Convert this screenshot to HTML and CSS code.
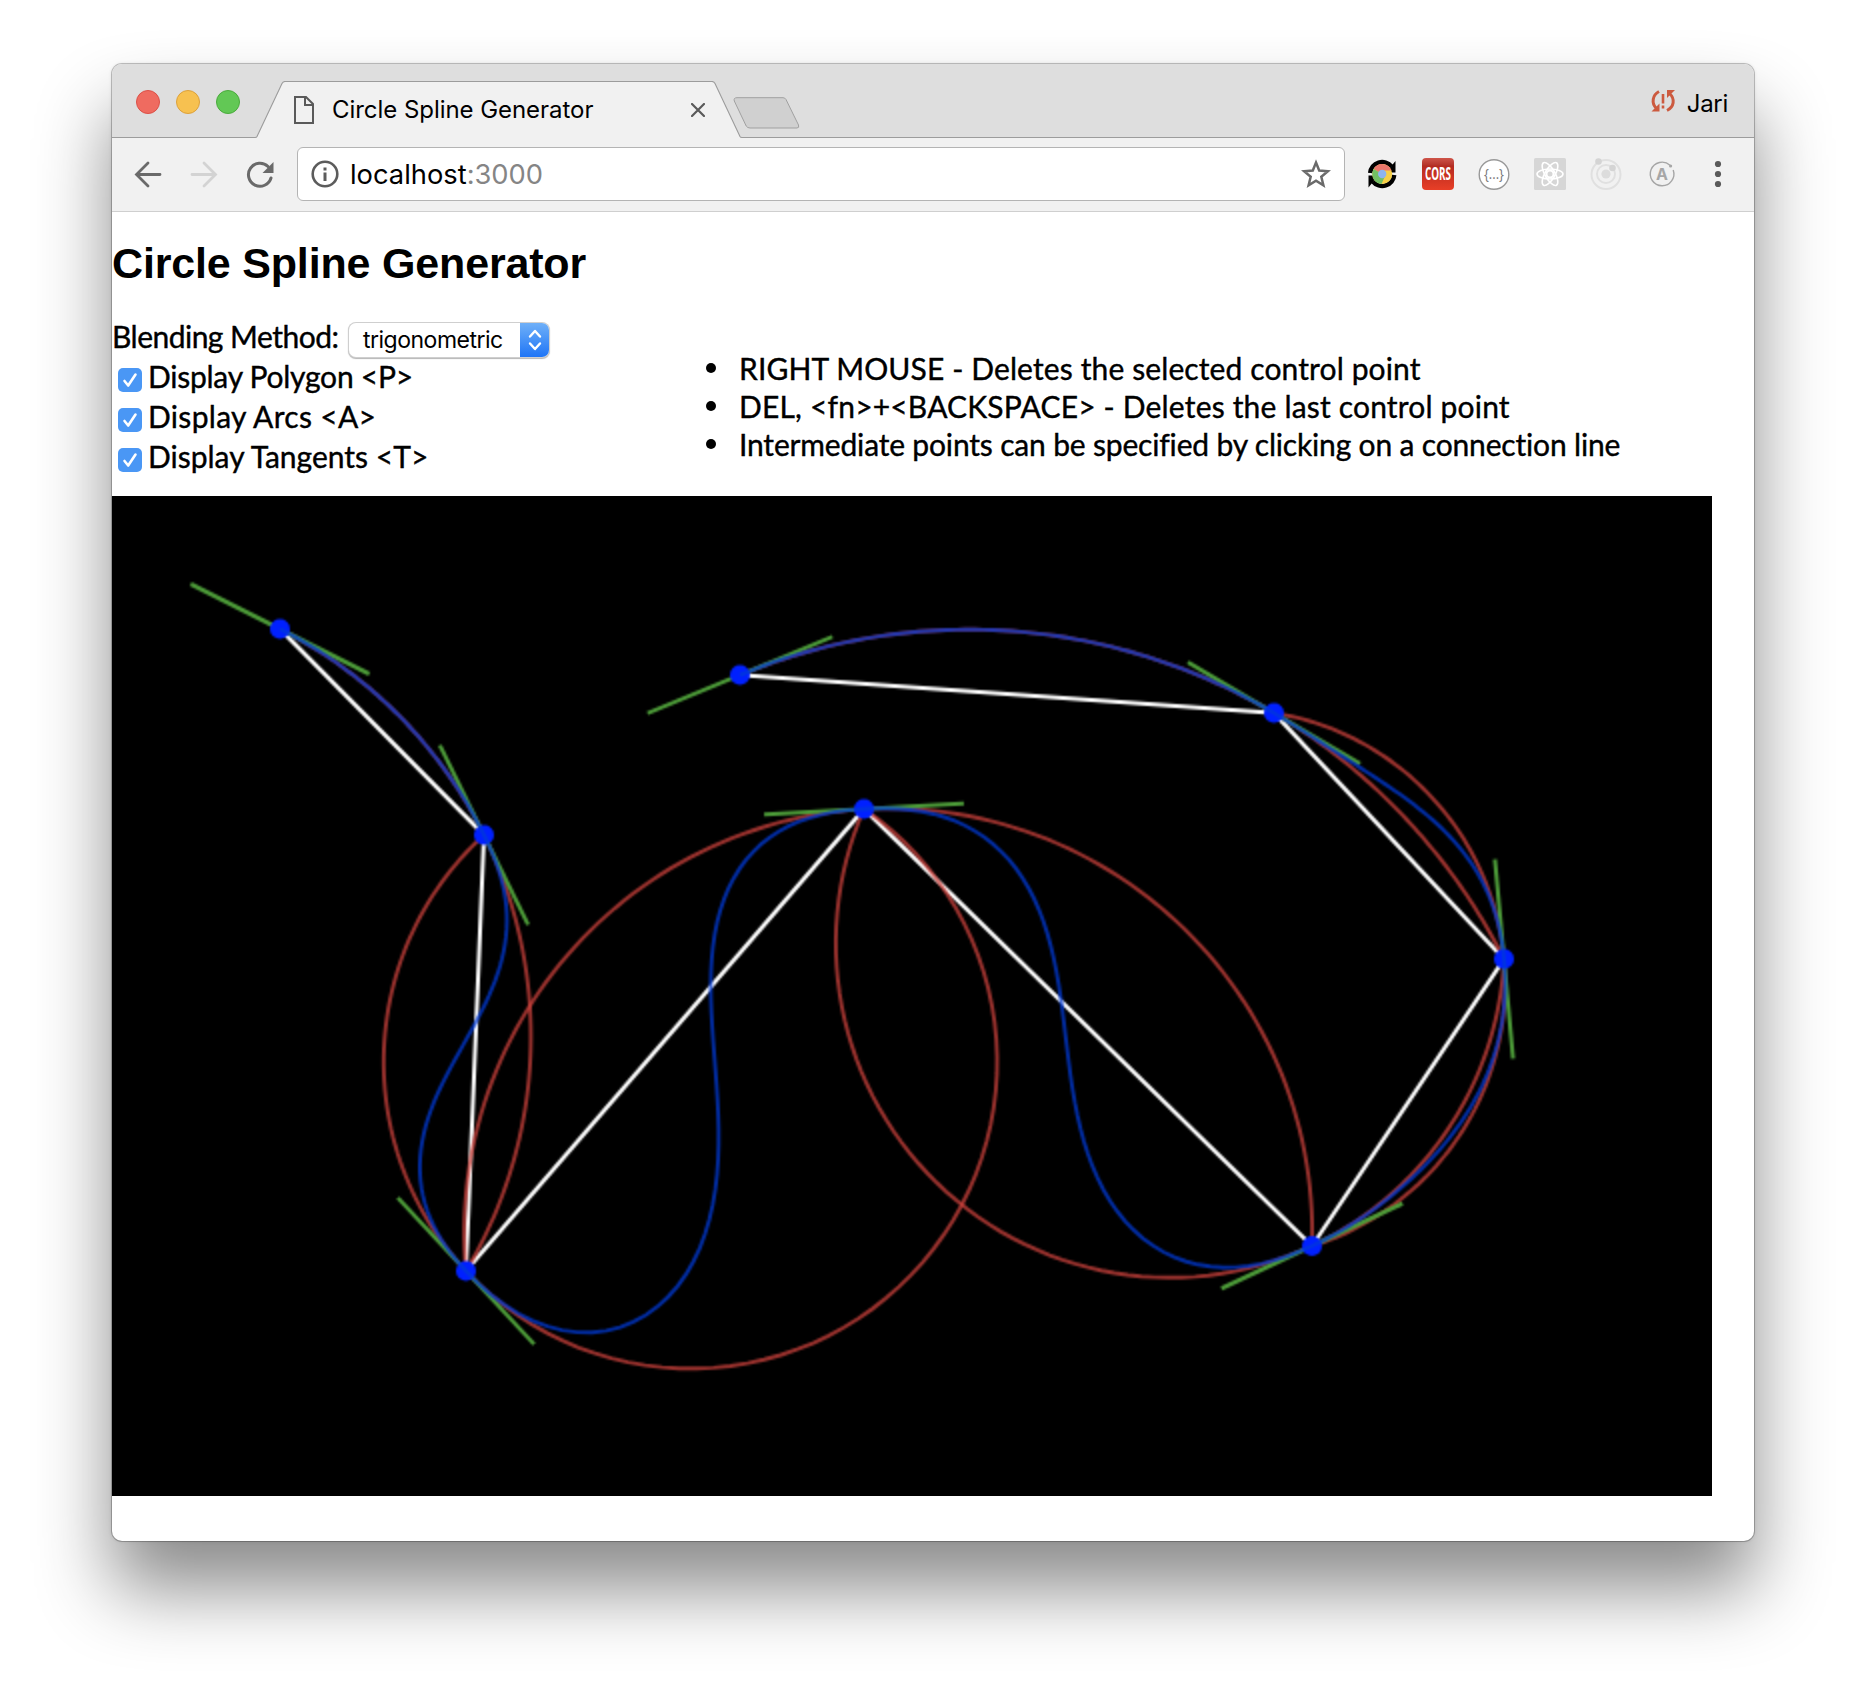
FILE: index.html
```
<!DOCTYPE html>
<html lang="en">
<head>
<meta charset="utf-8">
<title>Circle Spline Generator</title>
<link rel="stylesheet" href="styles.css">
</head>
<body>
<div class="window">
  <header class="titlebar">
    <div class="lights"><i class="light red"></i><i class="light yellow"></i><i class="light green"></i></div>
    <div class="tab">
      <svg class="tab-shape" width="488" height="58" viewBox="0 0 488 58"><path d="M0 56.5Q1.500 56.500 2 55.500L27 2.500Q28 .500 30 .500H457Q459 .500 460 2.500L485 55.500Q485.500 56.500 487 56.500V58H0Z" fill="#f1f1f1"/><path d="M0 56.500Q1.500 56.500 2 55.500L27 2.500Q28 .500 30 .500H457Q459 .500 460 2.500L485 55.500Q485.500 56.500 487 56.500H488" fill="none" stroke="#9c9c9c" stroke-width="1.100"/></svg>
      <svg class="doc" width="20" height="28" viewBox="0 0 20 28"><path d="M1 1H12L19 8V27H1ZM11 1V9H19" fill="none" stroke="#5a5a5a" stroke-width="2"/></svg>
      <span class="tab-title">Circle Spline Generator</span>
      <svg class="close" width="14" height="14" viewBox="0 0 14 14"><path d="M1 1L13 13M13 1L1 13" stroke="#5a5a5a" stroke-width="2.200" stroke-linecap="round"/></svg>
    </div>
    <svg class="newtab" width="68" height="33" viewBox="0 0 68 33"><path d="M4 .700H50Q52 .700 53 2.500L65.500 28Q66.500 31 64 31H17Q14.500 31 13.200 29L1.300 4Q.300 .700 4 .700Z" fill="#d0d0d0" stroke="#a0a0a0"/></svg>
    <div class="profile">
      <svg width="26" height="24" viewBox="0 0 26 24"><g fill="none" stroke="#cc5a3f" stroke-width="3"><path d="M9 2.500C2.500 6 1 14 6.500 19.500M17 21.500C24 18 25.500 10 19.500 4.500"/><path d="M13 5V14.500M13 16.500V19.500" stroke-width="2.600"/></g><path d="M1.500 22.500H9.500V14.500ZM17 1H25L17 9Z" fill="#cc5a3f"/></svg>
      <span class="user">Jari</span>
    </div>
  </header>
  <nav class="toolbar">
    <div class="navs">
      <svg width="28" height="28" viewBox="0 0 28 28"><path d="M26 13.500H3M14 2L2.500 13.500L14 25" fill="none" stroke="#6a6a6a" stroke-width="2.800" stroke-linecap="round"/></svg>
      <svg width="28" height="28" viewBox="0 0 28 28"><path d="M2 13.500H25M14 2L25.500 13.500L14 25" fill="none" stroke="#d3d3d3" stroke-width="2.800" stroke-linecap="round"/></svg>
      <svg width="28" height="28" viewBox="0 0 28 28"><path d="M22 5.500A11.500 11.500 0 1 0 25 17" fill="none" stroke="#6a6a6a" stroke-width="3" stroke-linecap="round"/><path d="M27.500 1V12H16.500Z" fill="#6a6a6a"/></svg>
    </div>
    <div class="omnibox">
      <svg width="28" height="28" viewBox="0 0 28 28"><circle cx="14" cy="14" r="12.300" fill="none" stroke="#5c5c5c" stroke-width="2.600"/><path d="M12.500 7.500H15.500V10.500H12.500ZM12.500 12.500H15.500V21H12.500Z" fill="#5c5c5c"/></svg>
      <span class="url">localhost<span class="port">:3000</span></span>
      <svg class="star" width="30" height="30" viewBox="0 0 30 30"><path d="M15 3.500L18.200 11.500L27 12.200L20.300 17.800L22.400 26.300L15 21.700L7.600 26.300L9.700 17.800L3 12.200L11.800 11.500Z" fill="none" stroke="#6a6a6a" stroke-width="2.500"/></svg>
    </div>
    <div class="exts">
      <svg width="32" height="32" viewBox="0 0 32 32"><path d="M4.200 15A12 12 0 0 1 25.500 8.500M28.200 17A12 12 0 0 1 6.900 23.500" fill="none" stroke="#000" stroke-width="4.500"/><path d="M29.500 3V14.500H20ZM2.500 29.500V17.500H12Z" fill="#000"/><circle cx="16.200" cy="16" r="10" fill="#f6cf45"/><path d="M16.200 16L7.600 11A10 10 0 0 1 25.500 12.500H16Z" fill="#e9766b"/><path d="M16.200 16L7.600 11A10 10 0 0 0 15.500 26L19 18Z" fill="#72bf63"/><circle cx="16.200" cy="16" r="4.200" fill="#8db4ee"/></svg>
      <svg width="32" height="32" viewBox="0 0 32 32"><defs><linearGradient id="cors" x2="0" y2="1"><stop offset="0" stop-color="#cf554a"/><stop offset=".22" stop-color="#b5352b"/><stop offset=".25" stop-color="#b52b20"/><stop offset="1" stop-color="#e83f27"/></linearGradient></defs><rect width="32" height="32" rx="4" fill="url(#cors)"/><text x="3" y="22" class="cors-text" textLength="26" lengthAdjust="spacingAndGlyphs">CORS</text></svg>
      <svg width="32" height="32" viewBox="0 0 32 32"><circle cx="16" cy="16.500" r="14.800" fill="#fff" stroke="#999" stroke-width="1.400"/><text x="16" y="20.500" text-anchor="middle" class="json-text" textLength="20" lengthAdjust="spacingAndGlyphs">{...}</text></svg>
      <svg width="32" height="32" viewBox="0 0 32 32"><rect width="32" height="32" rx="1.500" fill="#d6d6d6"/><g fill="none" stroke="#fff" stroke-width="1.600"><ellipse cx="16" cy="16" rx="13" ry="5"/><ellipse cx="16" cy="16" rx="13" ry="5" transform="rotate(60 16 16)"/><ellipse cx="16" cy="16" rx="13" ry="5" transform="rotate(120 16 16)"/><circle cx="16" cy="16" r="3.500" stroke-width="2"/></g></svg>
      <svg width="32" height="32" viewBox="0 0 32 32"><g fill="none" stroke="#e0e0e0" stroke-width="2"><circle cx="16" cy="16.500" r="14.500"/><circle cx="16" cy="16" r="9"/></g><circle cx="16" cy="16" r="4.600" fill="#dcdcdc"/><circle cx="8.500" cy="3.500" r="3.300" fill="#d4d4d4"/><circle cx="22.500" cy="10" r="3.300" fill="#d4d4d4"/></svg>
      <svg width="32" height="32" viewBox="0 0 32 32"><path d="M24 7.200A11.800 11.800 0 1 0 27.200 12" fill="none" stroke="#a6a6a6" stroke-width="1.400"/><circle cx="24.600" cy="8" r="1.600" fill="#a6a6a6"/><text x="16" y="21.500" text-anchor="middle" class="a-text">A</text></svg>
      <svg width="32" height="32" viewBox="0 0 32 32"><g fill="#5a5a5a"><circle cx="16" cy="6" r="3.100"/><circle cx="16" cy="16" r="3.100"/><circle cx="16" cy="26" r="3.100"/></g></svg>
    </div>
  </nav>
  <main class="page">
    <h1>Circle Spline Generator</h1>
    <section class="controls">
      <div class="options">
        <div class="row"><span class="blend">Blending Method:</span>
          <span class="select"><span class="value">trigonometric</span><span class="stepper"><svg width="14" height="24" viewBox="0 0 14 24"><path d="M2 8.500L7 3L12 8.500M2 15.500L7 21L12 15.500" fill="none" stroke="#fff" stroke-width="2.400" stroke-linecap="round" stroke-linejoin="round"/></svg></span></span>
        </div>
        <div class="row check"><span class="box"><svg width="24" height="24" viewBox="0 0 24 24"><path d="M6.500 13L10.200 17.500L17.500 6.500" fill="none" stroke="#fff" stroke-width="2.600" stroke-linecap="round" stroke-linejoin="round"/></svg></span><span class="polygon">Display Polygon &lt;P&gt;</span></div>
        <div class="row check"><span class="box"><svg width="24" height="24" viewBox="0 0 24 24"><path d="M6.500 13L10.200 17.500L17.500 6.500" fill="none" stroke="#fff" stroke-width="2.600" stroke-linecap="round" stroke-linejoin="round"/></svg></span><span class="arcs">Display Arcs &lt;A&gt;</span></div>
        <div class="row check"><span class="box"><svg width="24" height="24" viewBox="0 0 24 24"><path d="M6.500 13L10.200 17.500L17.500 6.500" fill="none" stroke="#fff" stroke-width="2.600" stroke-linecap="round" stroke-linejoin="round"/></svg></span><span class="tangents">Display Tangents &lt;T&gt;</span></div>
      </div>
      <ul class="help">
        <li><span class="help-right">RIGHT MOUSE - Deletes the selected control point</span></li>
        <li><span class="help-del">DEL, &lt;fn&gt;+&lt;BACKSPACE&gt; - Deletes the last control point</span></li>
        <li><span class="help-line">Intermediate points can be specified by clicking on a connection line</span></li>
      </ul>
    </section>
    <canvas id="board" class="board" width="800" height="500"></canvas>
  </main>
</div>
<script src="spline.js"></script>
</body>
</html>
```
FILE: styles.css
```
* { box-sizing: border-box; }
body { margin: 0; height: 1700px; padding: 64px 0 0 112px; background: #fff; overflow: hidden; }
svg { display: block; flex: none; }

.window {
  width: 1642px;
  height: 1477px;
  border-radius: 10px;
  background: #fff;
  box-shadow: 0 0 0 1px rgba(0, 0, 0, .22), 0 48px 74px rgba(0, 0, 0, .46), 0 0 4px rgba(0, 0, 0, .12);
  overflow: hidden;
}

.titlebar {
  display: flex;
  height: 74px;
  padding-left: 24px;
  background: linear-gradient(#dedede 73px, #9c9c9c 73px);
  font-family: Inter, sans-serif;
  font-size: 24px;
  color: #000;
}
.lights { display: flex; gap: 16px; padding-top: 26px; width: 119px; }
.light { width: 24px; height: 24px; border-radius: 50%; border: 1px solid; }
.red { background: #ef6b60; border-color: #dc5047; }
.yellow { background: #f7c150; border-color: #dda13b; }
.green { background: #62c855; border-color: #4aab3c; }

.tab { position: relative; display: flex; width: 484px; margin-top: 17px; height: 57px; padding-left: 39px; }
.tab-shape { position: absolute; left: 0; top: 0; }
.doc, .close, .tab-title { position: relative; }
.doc { margin-top: 15px; }
.tab-title { margin: 14px 0 0 18px; line-height: 30px; width: 359px; white-space: nowrap; letter-spacing: -.05px; }
.close { margin-top: 22px; }
.newtab { margin: 33px 0 0 -6px; }
.profile { display: flex; gap: 11px; margin: 26px 26px 0 auto; line-height: 27px; }
.profile svg { margin-top: -1px; }
.user { letter-spacing: -.3px; }

.toolbar {
  display: flex;
  align-items: flex-start;
  height: 74px;
  padding-top: 9px;
  background: #f1f1f1;
  border-bottom: 1px solid #cfcfcf;
}
.navs { display: flex; gap: 28px; padding: 14px 0 0 22px; width: 185px; }
.omnibox {
  display: flex;
  align-items: center;
  width: 1048px;
  height: 54px;
  padding: 0 13px;
  border: 1px solid #b4b4b4;
  border-radius: 6px;
  background: #fff;
  font-family: Inter, sans-serif;
  font-size: 27.3px;
}
.url { margin: 1px 0 0 11px; white-space: nowrap; }
.port { color: #858585; }
.star { margin-left: auto; }
.exts { display: flex; gap: 24px; margin: 11px 0 0 21px; }
.cors-text { font: 700 17px "Open Sans", sans-serif; fill: #fff; }
.json-text { font: 14px "Open Sans", sans-serif; fill: #777; }
.a-text { font: 700 16px Inter, sans-serif; fill: #a6a6a6; }

.page { font-family: Lato, sans-serif; font-size: 30px; color: #000; white-space: nowrap; -webkit-text-stroke: .4px #000; }
h1 { margin: 0; padding-top: 26px; font: 700 43px/50px "Liberation Sans", sans-serif; letter-spacing: -.17px; -webkit-text-stroke: 0; }
.controls { display: flex; height: 208px; padding-top: 31px; }
.options { width: 587px; }
.row { display: flex; height: 40px; line-height: 35px; }
.check { padding-left: 6px; gap: 6px; }
.box { width: 24px; height: 24px; margin-top: 9px; border-radius: 5px; background: #4a97f5; }
.select {
  display: flex;
  justify-content: space-between;
  width: 200px;
  height: 34px;
  margin: 4px 0 0 auto;
  border-radius: 7px;
  background: #fff;
  box-shadow: 0 0 0 1px #cfcfcf, 0 1px 1px 1px #b5b5b5;
  font: 23px/35px Inter, sans-serif;
  letter-spacing: -.5px;
  -webkit-text-stroke: 0;
  overflow: hidden;
}
.row:first-child { width: 437px; }
.value { padding-left: 14px; }
.stepper { display: flex; align-items: center; justify-content: center; width: 29px; background: linear-gradient(#6fb0f8, #1f75f6); }
.blend { letter-spacing: -.52px; }
.polygon { letter-spacing: -.25px; }
.arcs { letter-spacing: .32px; }
.help { margin: 30px 0 0; padding: 0; list-style: none; }
.help li { display: flex; align-items: center; height: 38px; line-height: 38px; }
.help li::before { content: ""; width: 10px; height: 10px; margin: 0 23px 0 7px; border-radius: 50%; background: #000; }
.help-right { letter-spacing: .12px; }
.help-del { letter-spacing: .18px; }
.help-line { letter-spacing: -.17px; }
.board { display: block; width: 1600px; height: 1000px; background: #000; }
```
FILE: spline.js
```
const points = [[84, 66.5], [186, 169.5], [177, 387.5], [376, 156.5], [600, 375], [696, 231.5], [581, 108.5], [314, 89.5]];
const ctx = document.getElementById('board').getContext('2d');
const STEPS = 60;

const sub = (a, b) => [a[0] - b[0], a[1] - b[1]];
const angle = v => Math.atan2(v[1], v[0]);
const wrap = a => Math.atan2(Math.sin(a), Math.cos(a));

// Direction of the circle through points i-1, i, i+1, taken at point i.
function tangentAt(i) {
  const p = points[i - 1], q = points[i], r = points[i + 1];
  return angle(sub(q, p)) + angle(sub(r, q)) - angle(sub(r, p));
}

// Signed angles between the chord i -> i+1 and the arcs at its two ends.
function startTurn(i) {
  return wrap(tangentAt(i) - angle(sub(points[i + 1], points[i])));
}
function endTurn(i) {
  return wrap(angle(sub(points[i + 1], points[i])) - tangentAt(i + 1));
}

function arcPoint(i, turn, u) {
  const chord = sub(points[i + 1], points[i]);
  const ratio = Math.abs(turn) < 1e-6 ? u : Math.sin(u * turn) / Math.sin(turn);
  const length = Math.hypot(...chord) * ratio;
  const a = angle(chord) + (1 - u) * turn;
  return [points[i][0] + length * Math.cos(a), points[i][1] + length * Math.sin(a)];
}

function stroke(list, color, width) {
  ctx.beginPath();
  list.forEach(p => ctx.lineTo(p[0], p[1]));
  ctx.strokeStyle = color;
  ctx.lineWidth = width;
  ctx.stroke();
}

function sample(fn) {
  return Array.from({ length: STEPS + 1 }, (_, k) => fn(k / STEPS));
}

const last = points.length - 1;
const RED = 'rgba(204, 66, 60, .75)';
const GREEN = '#4c9b38';
const BLUE = 'rgba(0, 58, 214, .75)';

stroke(points, '#fff', 2);

for (let i = 0; i < last; i++) {
  if (i > 0) stroke(sample(u => arcPoint(i, startTurn(i), u)), RED, 1.9);
  if (i < last - 1) stroke(sample(u => arcPoint(i, endTurn(i), u)), RED, 1.9);
}

function drawTangent(i, a) {
  const dx = 50 * Math.cos(a), dy = 50 * Math.sin(a);
  const [x, y] = points[i];
  stroke([[x - dx, y - dy], [x + dx, y + dy]], GREEN, 2);
}
for (let i = 1; i < last; i++) drawTangent(i, tangentAt(i));
drawTangent(0, angle(sub(points[1], points[0])) + endTurn(0));
drawTangent(last, angle(sub(points[last], points[last - 1])) - startTurn(last - 1));

for (const [x, y] of points) {
  ctx.beginPath();
  ctx.arc(x, y, 5, 0, 2 * Math.PI);
  ctx.fillStyle = '#0020ff';
  ctx.fill();
}

const spline = [];
for (let i = 0; i < last; i++) {
  const a = i > 0 ? startTurn(i) : endTurn(i);
  const b = i < last - 1 ? endTurn(i) : startTurn(i);
  spline.push(...sample(u => {
    const c = Math.cos(u * Math.PI / 2) ** 2;
    return arcPoint(i, a * c + b * (1 - c), u);
  }));
}
stroke(spline, BLUE, 1.9);
```
